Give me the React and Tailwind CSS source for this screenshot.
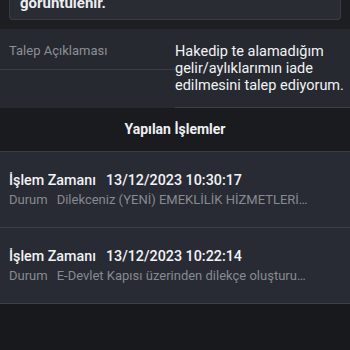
export default function App() {
  const items = [
    { time: "13/12/2023 10:30:17", status: "Dilekceniz (YENİ) EMEKLİLİK HİZMETLERİ DAİRE BAŞKANLIĞI birimine iletildi" },
    { time: "13/12/2023 10:22:14", status: "E-Devlet Kapısı üzerinden dilekçe oluşturuldu" },
  ];
  return (
    <div className="w-[350px] h-[350px] overflow-hidden bg-[#18191c] text-white" style={{ fontFamily: "Roboto, 'Noto Sans', sans-serif" }}>
      <div className="bg-[#1c1e22] pl-[9px] pr-[9px] pb-[9px]">
        <div className="h-[20px] rounded-b-[4px] bg-[#292c33] border border-t-0 border-[#3a3d44] pl-[10px] overflow-hidden">
          <div className="text-[15px] font-bold leading-[18px] text-[#eceef1] -mt-[6px]">görüntülenir.</div>
        </div>
      </div>
      <div className="bg-[#262930] h-[79px] flex">
        <div className="w-[175px] flex flex-col">
          <div className="h-[41px] border-b border-[#3a3d44] pl-[9px] pt-[13px] text-[13px] text-[#8c8f96] leading-[18px]">Talep Açıklaması</div>
        </div>
        <div className="flex-1 border-b border-[#3d4047] pt-[14px] text-[14.5px] leading-[17px] text-[#f2f3f5]">
          Hakedip te alamadığım gelir/aylıklarımın iade edilmesini talep ediyorum.
        </div>
      </div>
      <div className="h-[44px] bg-[#1a1b1e] border-b border-[#3a3d44] flex items-center justify-center text-[14px] font-bold text-[#eef0f2]">
        Yapılan İşlemler
      </div>
      {items.map((it, i) => (
        <div key={i} className="h-[76px] bg-[#282b33] border-b border-[#3c3f46] pl-[9px] pr-[10px] pt-[19px]">
          <div className="flex text-[14.3px] font-medium leading-[18px] text-[#f2f3f5]">
            <span>İşlem Zamanı</span>
            <span className="ml-[10px]">{it.time}</span>
          </div>
          <div className="flex text-[13px] leading-[18px] mt-[2px] text-[#878a91] whitespace-nowrap">
            <span>Durum</span>
            <span className="ml-[9px] truncate w-[252px]">{it.status}</span>
          </div>
        </div>
      ))}
    </div>
  );
}
